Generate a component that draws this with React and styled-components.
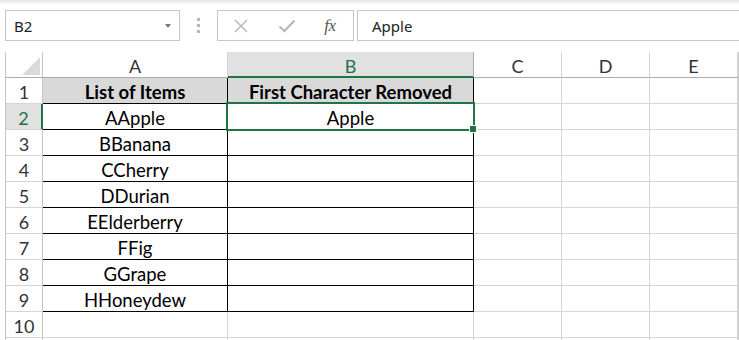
import React from "react";
import styled, { createGlobalStyle } from "styled-components";

const Global = createGlobalStyle`
  html, body { margin: 0; padding: 0; background: #fff; }
  body { font-family: "Lato", "Liberation Sans", sans-serif; overflow: hidden; }
  * { box-sizing: border-box; }
`;

const GREEN = "#217346";
const GRID = "#d4d4d4";

const Page = styled.div`
  width: 739px;
  height: 340px;
  overflow: hidden;
  background: linear-gradient(#e6e6e6 0px, #ffffff 5px);
`;

const FormulaBar = styled.div`
  display: flex;
  align-items: stretch;
  height: 31px;
  margin: 10px 0 11px 5px;
`;

const NameBox = styled.div`
  width: 175px;
  border: 1px solid #c6c6c6;
  background: #fff;
  display: flex;
  align-items: center;
  justify-content: space-between;
  padding: 0 8px 0 8px;
  font-family: "Noto Sans", "Open Sans", sans-serif;
  font-size: 15px;
  color: #222;
`;

const Caret = styled.span`
  width: 0;
  height: 0;
  border-left: 3.5px solid transparent;
  border-right: 3.5px solid transparent;
  border-top: 4px solid #777;
`;

const Grip = styled.div`
  width: 37px;
  display: flex;
  flex-direction: column;
  align-items: center;
  justify-content: center;
  gap: 3px;
  & > span {
    width: 3px;
    height: 3px;
    background: #b8b8b8;
  }
`;

const ButtonGroup = styled.div`
  width: 137px;
  border: 1px solid #c6c6c6;
  display: flex;
  align-items: center;
  padding-left: 14px;
`;

const IconSlot = styled.div`
  width: ${(p) => p.$w}px;
  display: flex;
  align-items: center;
  justify-content: center;
`;

const Fx = styled.span`
  font-family: "Liberation Serif", "DejaVu Serif", serif;
  font-style: italic;
  font-size: 17px;
  color: #555;
  letter-spacing: -0.5px;
`;

const FormulaInput = styled.div`
  flex: 1;
  margin-left: 3px;
  border: 1px solid #c6c6c6;
  border-right: none;
  display: flex;
  align-items: center;
  padding-left: 14px;
  font-family: "Noto Sans", "Open Sans", sans-serif;
  font-size: 15px;
  color: #222;
`;

const Sheet = styled.div`
  display: grid;
  grid-template-columns: 37px 185px 246px 88px 88px 88px 1fr;
  grid-auto-rows: 26px;
  margin-left: 5px;
  border-left: 1px solid #c6c6c6;
`;

const Corner = styled.div`
  position: relative;
  border-right: 1px solid #c6c6c6;
  border-bottom: 1px solid #ababab;
  &::after {
    content: "";
    position: absolute;
    right: 2px;
    bottom: 2px;
    width: 0;
    height: 0;
    border-left: 18px solid transparent;
    border-bottom: 18px solid #dadada;
  }
`;

const ColHeader = styled.div`
  display: flex;
  align-items: center;
  justify-content: center;
  font-size: 18px;
  padding-top: 3px;
  color: ${(p) => (p.$selected ? GREEN : "#333")};
  background: ${(p) => (p.$selected ? "#e1e1e1" : "#fff")};
  border-right: 1px solid ${(p) => (p.$selected ? "#ababab" : GRID)};
  border-bottom: ${(p) => (p.$selected ? `2px solid ${GREEN}` : "1px solid #ababab")};
`;

const RowHeader = styled.div`
  display: flex;
  align-items: center;
  justify-content: center;
  font-size: 18px;
  padding-top: 2px;
  color: ${(p) => (p.$selected ? GREEN : "#333")};
  background: ${(p) => (p.$selected ? "#e1e1e1" : "#fff")};
  border-right: ${(p) => (p.$selected ? `2px solid ${GREEN}` : "1px solid #c6c6c6")};
  border-bottom: 1px solid ${GRID};
`;

const Cell = styled.div`
  position: relative;
  display: flex;
  align-items: center;
  justify-content: center;
  padding-top: 2px;
  font-size: 18.5px;
  color: #000;
  white-space: nowrap;
  font-weight: ${(p) => (p.$bold ? 700 : 400)};
  background: ${(p) => (p.$fill ? "#d9d9d9" : "#fff")};
  border-right: 1px solid ${(p) => (p.$boxed ? "#000" : GRID)};
  border-bottom: 1px solid ${(p) => (p.$boxed ? "#000" : GRID)};
`;

const Selection = styled.div`
  position: absolute;
  z-index: 2;
  left: -2px;
  top: -2px;
  width: 249px;
  height: 29px;
  border: 2px solid ${GREEN};
  pointer-events: none;
`;

const FillHandle = styled.div`
  position: absolute;
  right: -4px;
  bottom: -4px;
  width: 8px;
  height: 8px;
  background: ${GREEN};
  border: 1px solid #fff;
`;

const items = [
  "AApple",
  "BBanana",
  "CCherry",
  "DDurian",
  "EElderberry",
  "FFig",
  "GGrape",
  "HHoneydew",
];

const cols = ["A", "B", "C", "D", "E", ""];

function XIcon() {
  return (
    <svg width="16" height="16" viewBox="0 0 16 16">
      <path d="M2 2 L14 14 M14 2 L2 14" stroke="#b5b5b5" strokeWidth="1.4" fill="none" />
    </svg>
  );
}

function CheckIcon() {
  return (
    <svg width="18" height="14" viewBox="0 0 18 14">
      <path d="M1.5 7.5 L6.5 12 L16.5 1.5" stroke="#b5b5b5" strokeWidth="2" fill="none" />
    </svg>
  );
}

export default function App() {
  const rows = [];
  for (let r = 1; r <= 11; r++) {
    const selectedRow = r === 2;
    rows.push(
      <RowHeader key={`h${r}`} $selected={selectedRow}>
        {r <= 10 ? r : ""}
      </RowHeader>
    );
    const boxed = r <= 9;
    const aText = r === 1 ? "List of Items" : r <= 9 ? items[r - 2] : "";
    const bText = r === 1 ? "First Character Removed" : r === 2 ? "Apple" : "";
    rows.push(
      <Cell key={`a${r}`} $boxed={boxed} $fill={r === 1} $bold={r === 1}>
        {aText}
      </Cell>
    );
    rows.push(
      <Cell key={`b${r}`} $boxed={boxed} $fill={r === 1} $bold={r === 1}>
        {bText}
        {r === 2 && (
          <Selection>
            <FillHandle />
          </Selection>
        )}
      </Cell>
    );
    for (let c = 0; c < 4; c++) rows.push(<Cell key={`x${r}-${c}`} />);
  }

  return (
    <Page>
      <Global />
      <FormulaBar>
        <NameBox>
          <span>B2</span>
          <Caret />
        </NameBox>
        <Grip>
          <span />
          <span />
          <span />
        </Grip>
        <ButtonGroup>
          <IconSlot $w={18}>
            <XIcon />
          </IconSlot>
          <IconSlot $w={74}>
            <CheckIcon />
          </IconSlot>
          <IconSlot $w={12}>
            <Fx>fx</Fx>
          </IconSlot>
        </ButtonGroup>
        <FormulaInput>Apple</FormulaInput>
      </FormulaBar>
      <Sheet>
        <Corner />
        {cols.map((c, i) => (
          <ColHeader key={i} $selected={c === "B"}>
            {c}
          </ColHeader>
        ))}
        {rows}
      </Sheet>
    </Page>
  );
}
